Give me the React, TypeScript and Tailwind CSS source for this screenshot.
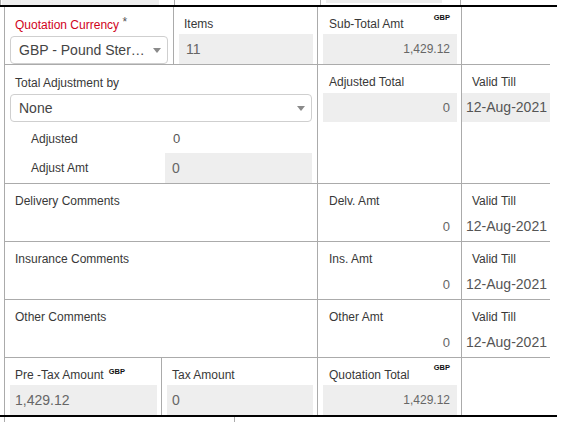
import React from "react";

const line = "border-[#ababab]";

const Caret = () => (
  <svg width="8" height="5" viewBox="0 0 8 5" className="shrink-0">
    <path d="M0 0 L8 0 L4 5 Z" fill="#8a8a8a" />
  </svg>
);

const Gbp = () => (
  <span className="block text-[7.5px] font-bold leading-none text-[#111]">GBP</span>
);

// label + grey read-only box, used all over the totals grid
const AmountCell: React.FC<{
  label: string;
  value: string;
  w: string;
  right?: boolean;
  gbp?: boolean;
  border?: boolean;
}> = ({ label, value, w, right, gbp, border = true }) => (
  <div className={`${w} relative shrink-0 pt-[9px] pl-[5px] pr-[4px] ${border ? `border-r ${line}` : ""}`}>
    <div className="h-[16px] leading-[16px] text-[12px] text-[#383838] pl-[6px]">{label}</div>
    {gbp && (
      <div className="absolute top-[6px] right-[11px] flex leading-none">
        <Gbp />
      </div>
    )}
    <div
      className={`mt-[2px] h-[30px] bg-[#eeeeee] flex items-center ${
        right ? "justify-end pr-[7px] text-[12px]" : "pl-[7px] text-[14px]"
      } text-[#666]`}
    >
      {value}
    </div>
  </div>
);

const CommentRow: React.FC<{ label: string; amtLabel: string }> = ({ label, amtLabel }) => (
  <div className={`flex h-[58px] border-b ${line}`}>
    <div className={`w-[313px] shrink-0 border-r ${line} pt-[9px] pl-[10px]`}>
      <div className="h-[16px] leading-[16px] text-[12px] text-[#383838]">{label}</div>
    </div>
    <div className={`w-[144px] shrink-0 border-r ${line} pt-[9px] pl-[5px] pr-[4px]`}>
      <div className="h-[16px] leading-[16px] text-[12px] text-[#383838] pl-[6px]">{amtLabel}</div>
      <div className="mt-[3px] h-[29px] flex items-center justify-end pr-[7px] text-[13px] text-[#666]">0</div>
    </div>
    <div className="w-[88px] shrink-0 pt-[9px]">
      <div className="h-[16px] leading-[16px] text-[12px] text-[#383838] pl-[10px]">Valid Till</div>
      <div className="mt-[3px] h-[29px] flex items-center pl-[4px] text-[14px] text-[#555]">12-Aug-2021</div>
    </div>
  </div>
);

export default function App() {
  return (
    <div className="w-[567px] h-[422px] bg-white overflow-hidden font-['Liberation_Sans',Arial,sans-serif]">
      {/* tail of the block above */}
      <div className="flex h-[5px]">
        <div className="w-[2px] border-l border-[#ababab]" />
        <div className="w-[157px] bg-[#eeeeee]" />
        <div className={`w-[16px] border-r ${line}`} />
        <div className={`w-[146px] border-r ${line}`} />
        <div className={`w-[140px] border-r ${line} pl-[5px]`}>
          <div className="w-[116px] h-[3px] bg-[#eeeeee]" />
        </div>
      </div>
      <div className="w-[557px] h-[2px] bg-black" />

      <div className={`ml-[4px] w-[546px] border-l ${line}`}>
        {/* row 1 */}
        <div className={`flex h-[58px] border-b ${line}`}>
          <div className={`w-[169px] shrink-0 border-r ${line} pt-[10px] px-[5px]`}>
            <div className="h-[16px] leading-[16px] text-[12px] text-[#d0021b] pl-[5px]">
              Quotation Currency <span className="text-[#555] relative -top-[3px]">*</span>
            </div>
            <div className="mt-[3px] h-[28px] border border-[#cfcfcf] rounded-[4px] flex items-center pl-[8px] pr-[6px]">
              <span className="w-[127px] truncate text-[14px] text-[#444]">GBP - Pound Sterling</span>
              <span className="ml-auto">
                <Caret />
              </span>
            </div>
          </div>
          <div className={`w-[144px] shrink-0 border-r ${line} pt-[9px] pl-[5px] pr-[4px]`}>
            <div className="h-[16px] leading-[16px] text-[12px] text-[#383838] pl-[5px]">Items</div>
            <div className="mt-[2px] h-[30px] bg-[#eeeeee] flex items-center pl-[7px] text-[14px] text-[#666]">11</div>
          </div>
          <div className={`w-[144px] shrink-0 border-r ${line} relative pt-[9px] pl-[5px] pr-[4px]`}>
            <div className="h-[16px] leading-[16px] text-[12px] text-[#383838] pl-[6px]">Sub-Total Amt</div>
            <div className="absolute top-[7px] right-[11px] flex leading-none">
              <Gbp />
            </div>
            <div className="mt-[2px] h-[30px] bg-[#eeeeee] flex items-center justify-end pr-[7px] text-[12px] text-[#666]">
              1,429.12
            </div>
          </div>
          <div className="w-[88px] shrink-0" />
        </div>

        {/* row 2 */}
        <div className={`flex h-[119px] border-b ${line}`}>
          <div className={`w-[313px] shrink-0 border-r ${line} pt-[10px] px-[5px]`}>
            <div className="h-[16px] leading-[16px] text-[12px] text-[#383838] pl-[5px]">Total Adjustment by</div>
            <div className="mt-[3px] h-[28px] border border-[#cfcfcf] rounded-[4px] flex items-center pl-[8px] pr-[6px]">
              <span className="text-[14px] text-[#444]">None</span>
              <span className="ml-auto">
                <Caret />
              </span>
            </div>
            <div className="mt-[2px] h-[29px] flex items-center">
              <div className="w-[156px] pl-[21px] text-[12px] text-[#383838]">Adjusted</div>
              <div className="pl-[7px] text-[13px] text-[#555]">0</div>
            </div>
            <div className="h-[30px] flex items-center">
              <div className="w-[156px] pl-[21px] text-[12px] text-[#383838]">Adjust Amt</div>
              <div className="w-[148px] h-[30px] bg-[#eeeeee] flex items-center pl-[7px] text-[14px] text-[#666]">0</div>
            </div>
          </div>
          <div className={`w-[144px] shrink-0 border-r ${line} pt-[9px] pl-[5px] pr-[4px]`}>
            <div className="h-[16px] leading-[16px] text-[12px] text-[#383838] pl-[6px]">Adjusted Total</div>
            <div className="mt-[3px] h-[29px] bg-[#eeeeee] flex items-center justify-end pr-[7px] text-[13px] text-[#666]">0</div>
          </div>
          <div className="w-[88px] shrink-0 pt-[9px]">
            <div className="h-[16px] leading-[16px] text-[12px] text-[#383838] pl-[10px]">Valid Till</div>
            <div className="mt-[3px] h-[29px] bg-[#eeeeee] flex items-center pl-[4px] text-[14px] text-[#555]">12-Aug-2021</div>
          </div>
        </div>

        <CommentRow label="Delivery Comments" amtLabel="Delv. Amt" />
        <CommentRow label="Insurance Comments" amtLabel="Ins. Amt" />
        <CommentRow label="Other Comments" amtLabel="Other Amt" />

        {/* totals */}
        <div className="flex h-[57px]">
          <div className={`w-[157px] shrink-0 border-r ${line} pt-[9px] pl-[5px] pr-[4px]`}>
            <div className="h-[16px] leading-[16px] text-[12px] text-[#383838] pl-[5px] flex items-start">
              Pre -Tax Amount
              <span className="ml-[5px] mt-[1px]">
                <Gbp />
              </span>
            </div>
            <div className="mt-[2px] h-[30px] bg-[#eeeeee] flex items-center pl-[5px] text-[14px] text-[#666]">1,429.12</div>
          </div>
          <div className={`w-[156px] shrink-0 border-r ${line} pt-[9px] pl-[5px] pr-[4px]`}>
            <div className="h-[16px] leading-[16px] text-[12px] text-[#383838] pl-[5px]">Tax Amount</div>
            <div className="mt-[2px] h-[30px] bg-[#eeeeee] flex items-center pl-[5px] text-[14px] text-[#666]">0</div>
          </div>
          <AmountCell w="w-[144px]" label="Quotation Total" value="1,429.12" right gbp />
          <div className="w-[88px] shrink-0" />
        </div>
      </div>

      <div className="w-[557px] h-[2px] bg-black" />
      {/* head of the block below */}
      <div className="flex h-[5px]">
        <div className="w-[4px]" />
        <div className={`w-[231px] border-l border-r ${line}`} />
      </div>
    </div>
  );
}
